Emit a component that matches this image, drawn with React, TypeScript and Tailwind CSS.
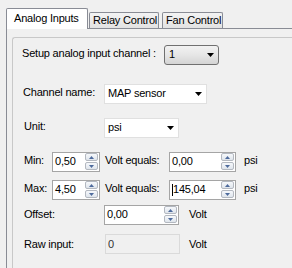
import React from 'react';

const Arrow: React.FC = () => (
  <svg width="7" height="4" viewBox="0 0 7 4" className="shrink-0">
    <path d="M0 0h7L3.5 4z" fill="#000" />
  </svg>
);

const SpinArrow: React.FC<{ up?: boolean }> = ({ up }) => (
  <svg width="5" height="3" viewBox="0 0 5 3">
    <path d={up ? 'M0 3h5L2.5 0z' : 'M0 0h5L2.5 3z'} fill="#4d6a9c" />
  </svg>
);

const Combo: React.FC<{ value: string; width: string; button?: boolean }> = ({ value, width, button }) => (
  <div
    className={
      button
        ? `${width} h-[20px] flex items-center justify-between pl-[4px] pr-[4px] rounded-[3px] border border-[#707070] bg-gradient-to-b from-[#f2f2f2] via-[#e6e6e6] to-[#d4d4d4]`
        : `${width} h-[20px] flex items-center justify-between pl-[3px] pr-[4px] border border-[#e0e0e0] bg-white`
    }
  >
    <span className="mb-[1px]">{value}</span>
    <Arrow />
  </div>
);

const Spin: React.FC<{ value: string; width: string; cursor?: boolean }> = ({ value, width, cursor }) => (
  <div className={`${width} h-[20px] flex border border-[#a5a5a5] bg-white`}>
    <div className="flex-1 flex items-center pl-[2px]">
      {cursor && <span className="w-px h-[12px] bg-black" />}
      <span className="mb-[1px]">{value}</span>
    </div>
    <div className="flex flex-col gap-[1px] w-[13px] mr-[1px] pb-[1px]">
      <div className="flex-1 flex items-center justify-center rounded-[2px] border border-[#b3b8c0] bg-gradient-to-b from-[#f6f8fb] to-[#dfe5ec]">
        <SpinArrow up />
      </div>
      <div className="flex-1 flex items-center justify-center rounded-[2px] border border-[#b3b8c0] bg-gradient-to-b from-[#f6f8fb] to-[#dfe5ec]">
        <SpinArrow />
      </div>
    </div>
  </div>
);

export default function App() {
  return (
    <div className="w-[292px] h-[268px] overflow-hidden bg-[#f0f0f0] pl-[6px] pt-[8px] font-['Liberation_Sans',Arial,sans-serif] text-[11px] leading-[13px] tracking-[-0.2px] whitespace-nowrap text-black">
      <div className="flex items-end h-[20px]">
        <div className="relative z-10 w-[82px] h-[21px] -mb-[1px] border border-b-0 border-[#898c95] rounded-t-[2px] bg-white pl-[7px] pt-[3px]">
          Analog Inputs
        </div>
        <div className="ml-[1px] w-[70px] h-[16px] flex items-center pl-[3px] overflow-hidden border border-b-0 border-[#898c95] rounded-t-[2px] bg-gradient-to-b from-[#f3f3f3] to-[#e2e2e2]">
          Relay Control
        </div>
        <div className="ml-[3px] w-[61px] h-[16px] flex items-center pl-[3px] overflow-hidden border border-b-0 border-[#898c95] rounded-t-[2px] bg-gradient-to-b from-[#f3f3f3] to-[#e2e2e2]">
          Fan Control
        </div>
      </div>

      <div className="w-[300px] h-[260px] border-t border-l border-[#898c95] bg-[#f0f0f0] pt-[8px] pl-[5px]">
        <div className="w-[290px] h-[250px] border-t border-l border-[#c8c8c8] rounded-tl-[3px]">
          <div className="mt-[7px] h-[20px] flex items-center pl-[9px]">
            <span className="w-[142px] mb-[3px]">Setup analog input channel :</span>
            <Combo value="1" width="w-[55px]" button />
          </div>

          <div className="mt-[19px] h-[20px] flex items-center pl-[10px]">
            <span className="w-[81px] mb-[3px]">Channel name:</span>
            <Combo value="MAP sensor" width="w-[103px]" />
          </div>

          <div className="mt-[14px] h-[20px] flex items-center pl-[11px]">
            <span className="w-[80px] mb-[3px]">Unit:</span>
            <Combo value="psi" width="w-[75px]" />
          </div>

          <div className="mt-[14px] h-[20px] flex items-center pl-[11px]">
            <span className="w-[28px] mb-[3px]">Min:</span>
            <Spin value="0,50" width="w-[48px]" />
            <span className="w-[64px] ml-[5px] mb-[3px]">Volt equals:</span>
            <Spin value="0,00" width="w-[67px]" />
            <span className="ml-[8px] mb-[3px]">psi</span>
          </div>

          <div className="mt-[8px] h-[20px] flex items-center pl-[11px]">
            <span className="w-[28px] mb-[3px]">Max:</span>
            <Spin value="4,50" width="w-[48px]" />
            <span className="w-[64px] ml-[5px] mb-[3px]">Volt equals:</span>
            <Spin value="145,04" width="w-[67px]" cursor />
            <span className="ml-[8px] mb-[3px]">psi</span>
          </div>

          <div className="mt-[5px] h-[20px] flex items-center pl-[11px]">
            <span className="w-[80px] mb-[2px]">Offset:</span>
            <Spin value="0,00" width="w-[75px]" />
            <span className="ml-[10px] mb-[2px]">Volt</span>
          </div>

          <div className="mt-[9px] h-[20px] flex items-center pl-[11px]">
            <span className="w-[81px]">Raw input:</span>
            <div className="w-[75px] h-[20px] flex items-center pl-[2px] border border-[#dadada] bg-[#f0f0f0] text-[#333]">
              0
            </div>
            <span className="ml-[9px]">Volt</span>
          </div>
        </div>
      </div>
    </div>
  );
}
